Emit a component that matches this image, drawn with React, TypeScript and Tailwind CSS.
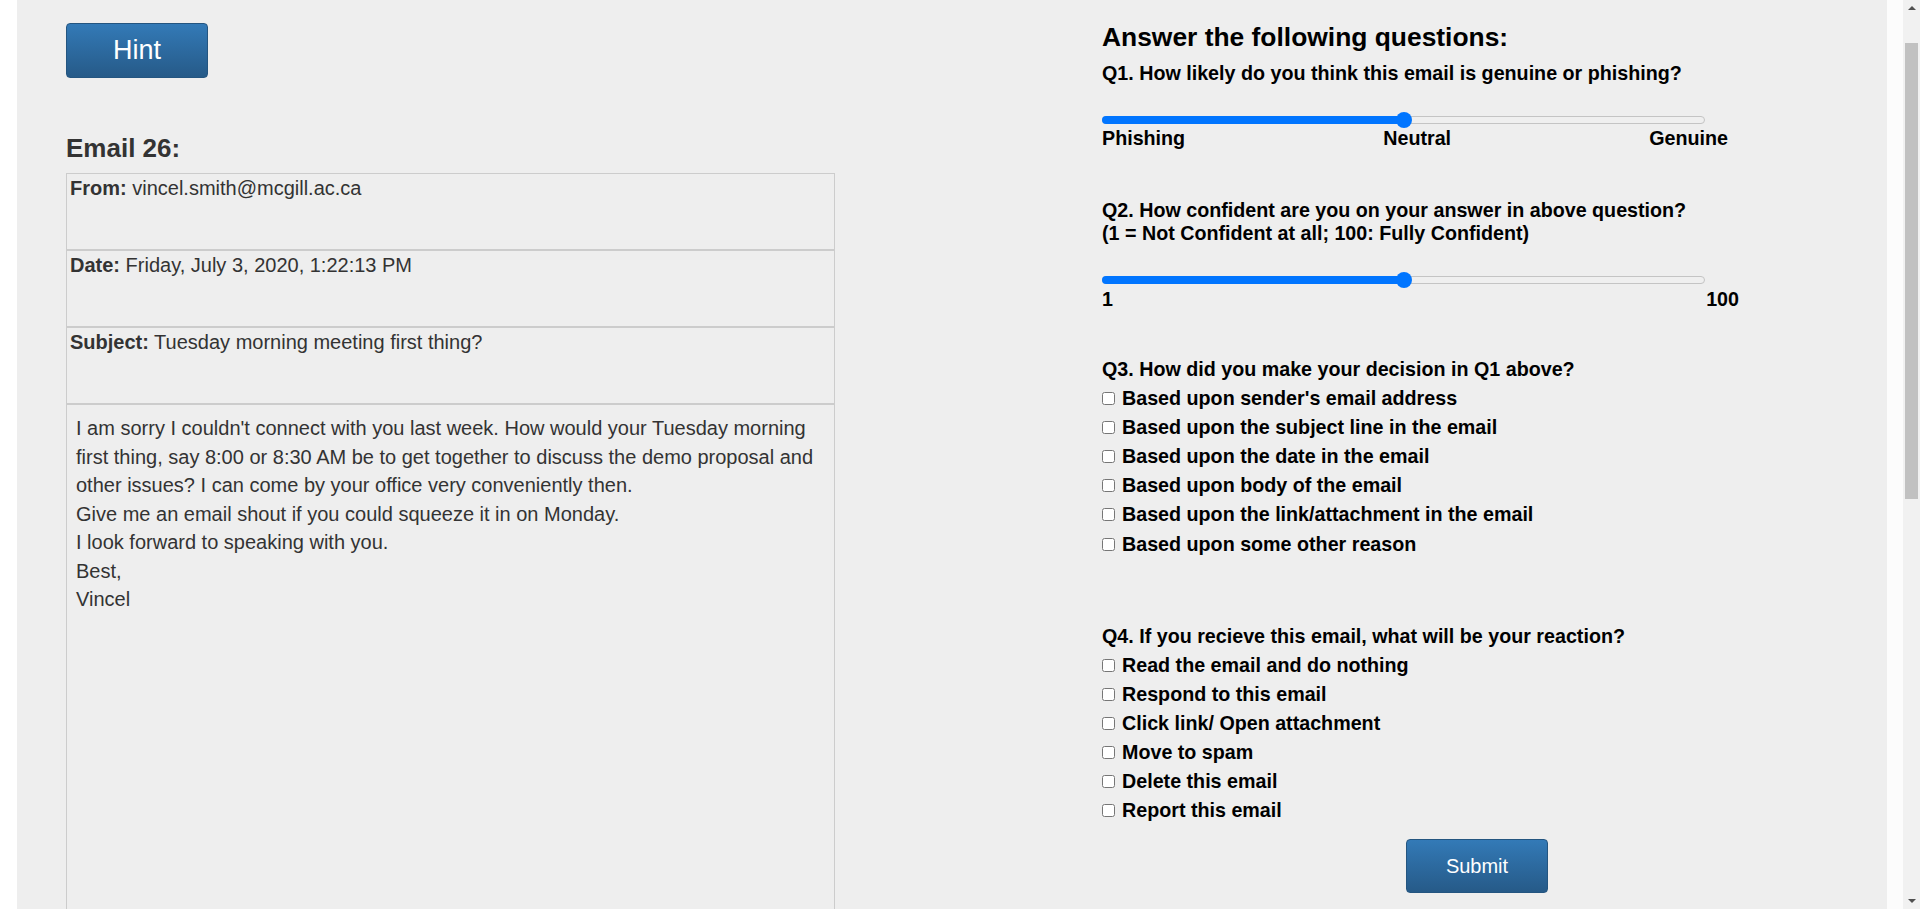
import React from "react";

const font = { fontFamily: '"Liberation Sans", Arial, sans-serif' };

const reasons = [
    "Based upon sender's email address",
    "Based upon the subject line in the email",
    "Based upon the date in the email",
    "Based upon body of the email",
    "Based upon the link/attachment in the email",
    "Based upon some other reason",
];

const reactions = [
    "Read the email and do nothing",
    "Respond to this email",
    "Click link/ Open attachment",
    "Move to spam",
    "Delete this email",
    "Report this email",
];

function Slider({ value }: { value: number }) {
    return (
        <div role="slider" aria-valuenow={value} className="relative h-[16px] w-[603px]">
            <div className="absolute left-0 right-0 top-[4px] h-[8px] rounded-full border border-[#c4c4c4] bg-[#efefef]" />
            <div className="absolute left-0 top-[4px] h-[8px] rounded-full bg-[#0075ff]" style={{ width: `${value}%` }} />
            <div className="absolute top-0 h-[16px] w-[16px] -translate-x-1/2 rounded-full bg-[#0075ff]" style={{ left: `${value}%` }} />
        </div>
    );
}

function CheckRow({ label, extra }: { label: string; extra?: boolean }) {
    return (
        <label className={`flex h-[23px] items-center gap-[7px] ${extra ? "mt-[1px]" : ""}`}>
            <input type="checkbox" className="m-0 h-[13px] w-[13px] shrink-0" />
            <span>{label}</span>
        </label>
    );
}

function EmailRow({ name, value }: { name: string; value: string }) {
    return (
        <div className="h-[77px] border border-[#cccccc] px-[3px] leading-[28.57px]">
            <b>{name}</b> {value}
        </div>
    );
}

export default function App() {
    return (
        <div className="flex h-[909px] overflow-hidden bg-white" style={font}>
            <div className="w-[17px] shrink-0 bg-white" />

            <main className="flex flex-1 bg-[#eeeeee]">
                {/* Email column */}
                <section className="ml-[49px] w-[769px] shrink-0 pt-[23px] text-[20px] text-[#333333]">
                    <button className="h-[55px] w-[142px] rounded-[4px] border border-[#245580] bg-linear-to-b from-[#337ab7] to-[#265a88] text-[27px] text-white">
                        Hint
                    </button>

                    <h3 className="mt-[55px] text-[26px] font-bold leading-[30px]">Email 26:</h3>

                    <div className="mt-[10px]">
                        <EmailRow name="From:" value="vincel.smith@mcgill.ac.ca" />
                        <EmailRow name="Date:" value="Friday, July 3, 2020, 1:22:13 PM" />
                        <EmailRow name="Subject:" value="Tuesday morning meeting first thing?" />
                        <div className="h-[600px] border border-[#cccccc] p-[9px] leading-[28.57px]">
                            I am sorry I couldn't connect with you last week. How would your Tuesday morning first thing, say 8:00 or 8:30 AM be to get together to discuss the demo proposal and other issues? I can come by your office very conveniently then.
                            <br />
                            Give me an email shout if you could squeeze it in on Monday.
                            <br />
                            I look forward to speaking with you.
                            <br />
                            Best,
                            <br />
                            Vincel
                        </div>
                    </div>
                </section>

                {/* Questions column */}
                <section className="ml-[267px] w-[640px] shrink-0 pt-[22px] text-[19.7px] font-bold leading-[23px] text-black">
                    <h2 className="text-[26.4px] leading-[30px]">Answer the following questions:</h2>

                    <p className="mt-[10px]">Q1. How likely do you think this email is genuine or phishing?</p>
                    <div className="mt-[27px]">
                        <Slider value={50} />
                    </div>
                    <div className="-mt-[1px] flex w-[626px] justify-between">
                        <span>Phishing</span>
                        <span>Neutral</span>
                        <span>Genuine</span>
                    </div>

                    <p className="mt-[49px]">
                        Q2. How confident are you on your answer in above question?
                        <br />
                        (1 = Not Confident at all; 100: Fully Confident)
                    </p>
                    <div className="mt-[27px]">
                        <Slider value={50} />
                    </div>
                    <div className="flex w-[637px] justify-between">
                        <span>1</span>
                        <span>100</span>
                    </div>

                    <p className="mt-[47px]">Q3. How did you make your decision in Q1 above?</p>
                    <div className="mt-[6px] flex flex-col gap-[6px]">
                        {reasons.map((r, i) => (
                            <CheckRow key={r} label={r} extra={i === reasons.length - 1} />
                        ))}
                    </div>

                    <p className="mt-[69px]">Q4. If you recieve this email, what will be your reaction?</p>
                    <div className="mt-[6px] flex flex-col gap-[6px]">
                        {reactions.map((r) => (
                            <CheckRow key={r} label={r} />
                        ))}
                    </div>

                    <button className="ml-[304px] mt-[17px] h-[54px] w-[142px] rounded-[4px] border border-[#245580] bg-linear-to-b from-[#337ab7] to-[#265a88] text-[20px] font-normal text-white">
                        Submit
                    </button>
                </section>
            </main>

            <div className="w-[16px] shrink-0 bg-[#fcfcfc]" />

            {/* Scrollbar */}
            <div className="flex w-[17px] shrink-0 flex-col items-center bg-[#f1f1f1]">
                <div className="mt-[6px] h-0 w-0 border-x-[4px] border-b-[4px] border-x-transparent border-b-[#505050]" />
                <div className="mt-[33px] h-[456px] w-[13px] bg-[#c1c1c1]" />
                <div className="mt-auto mb-[6px] h-0 w-0 border-x-[4px] border-t-[4px] border-x-transparent border-t-[#505050]" />
            </div>
        </div>
    );
}
